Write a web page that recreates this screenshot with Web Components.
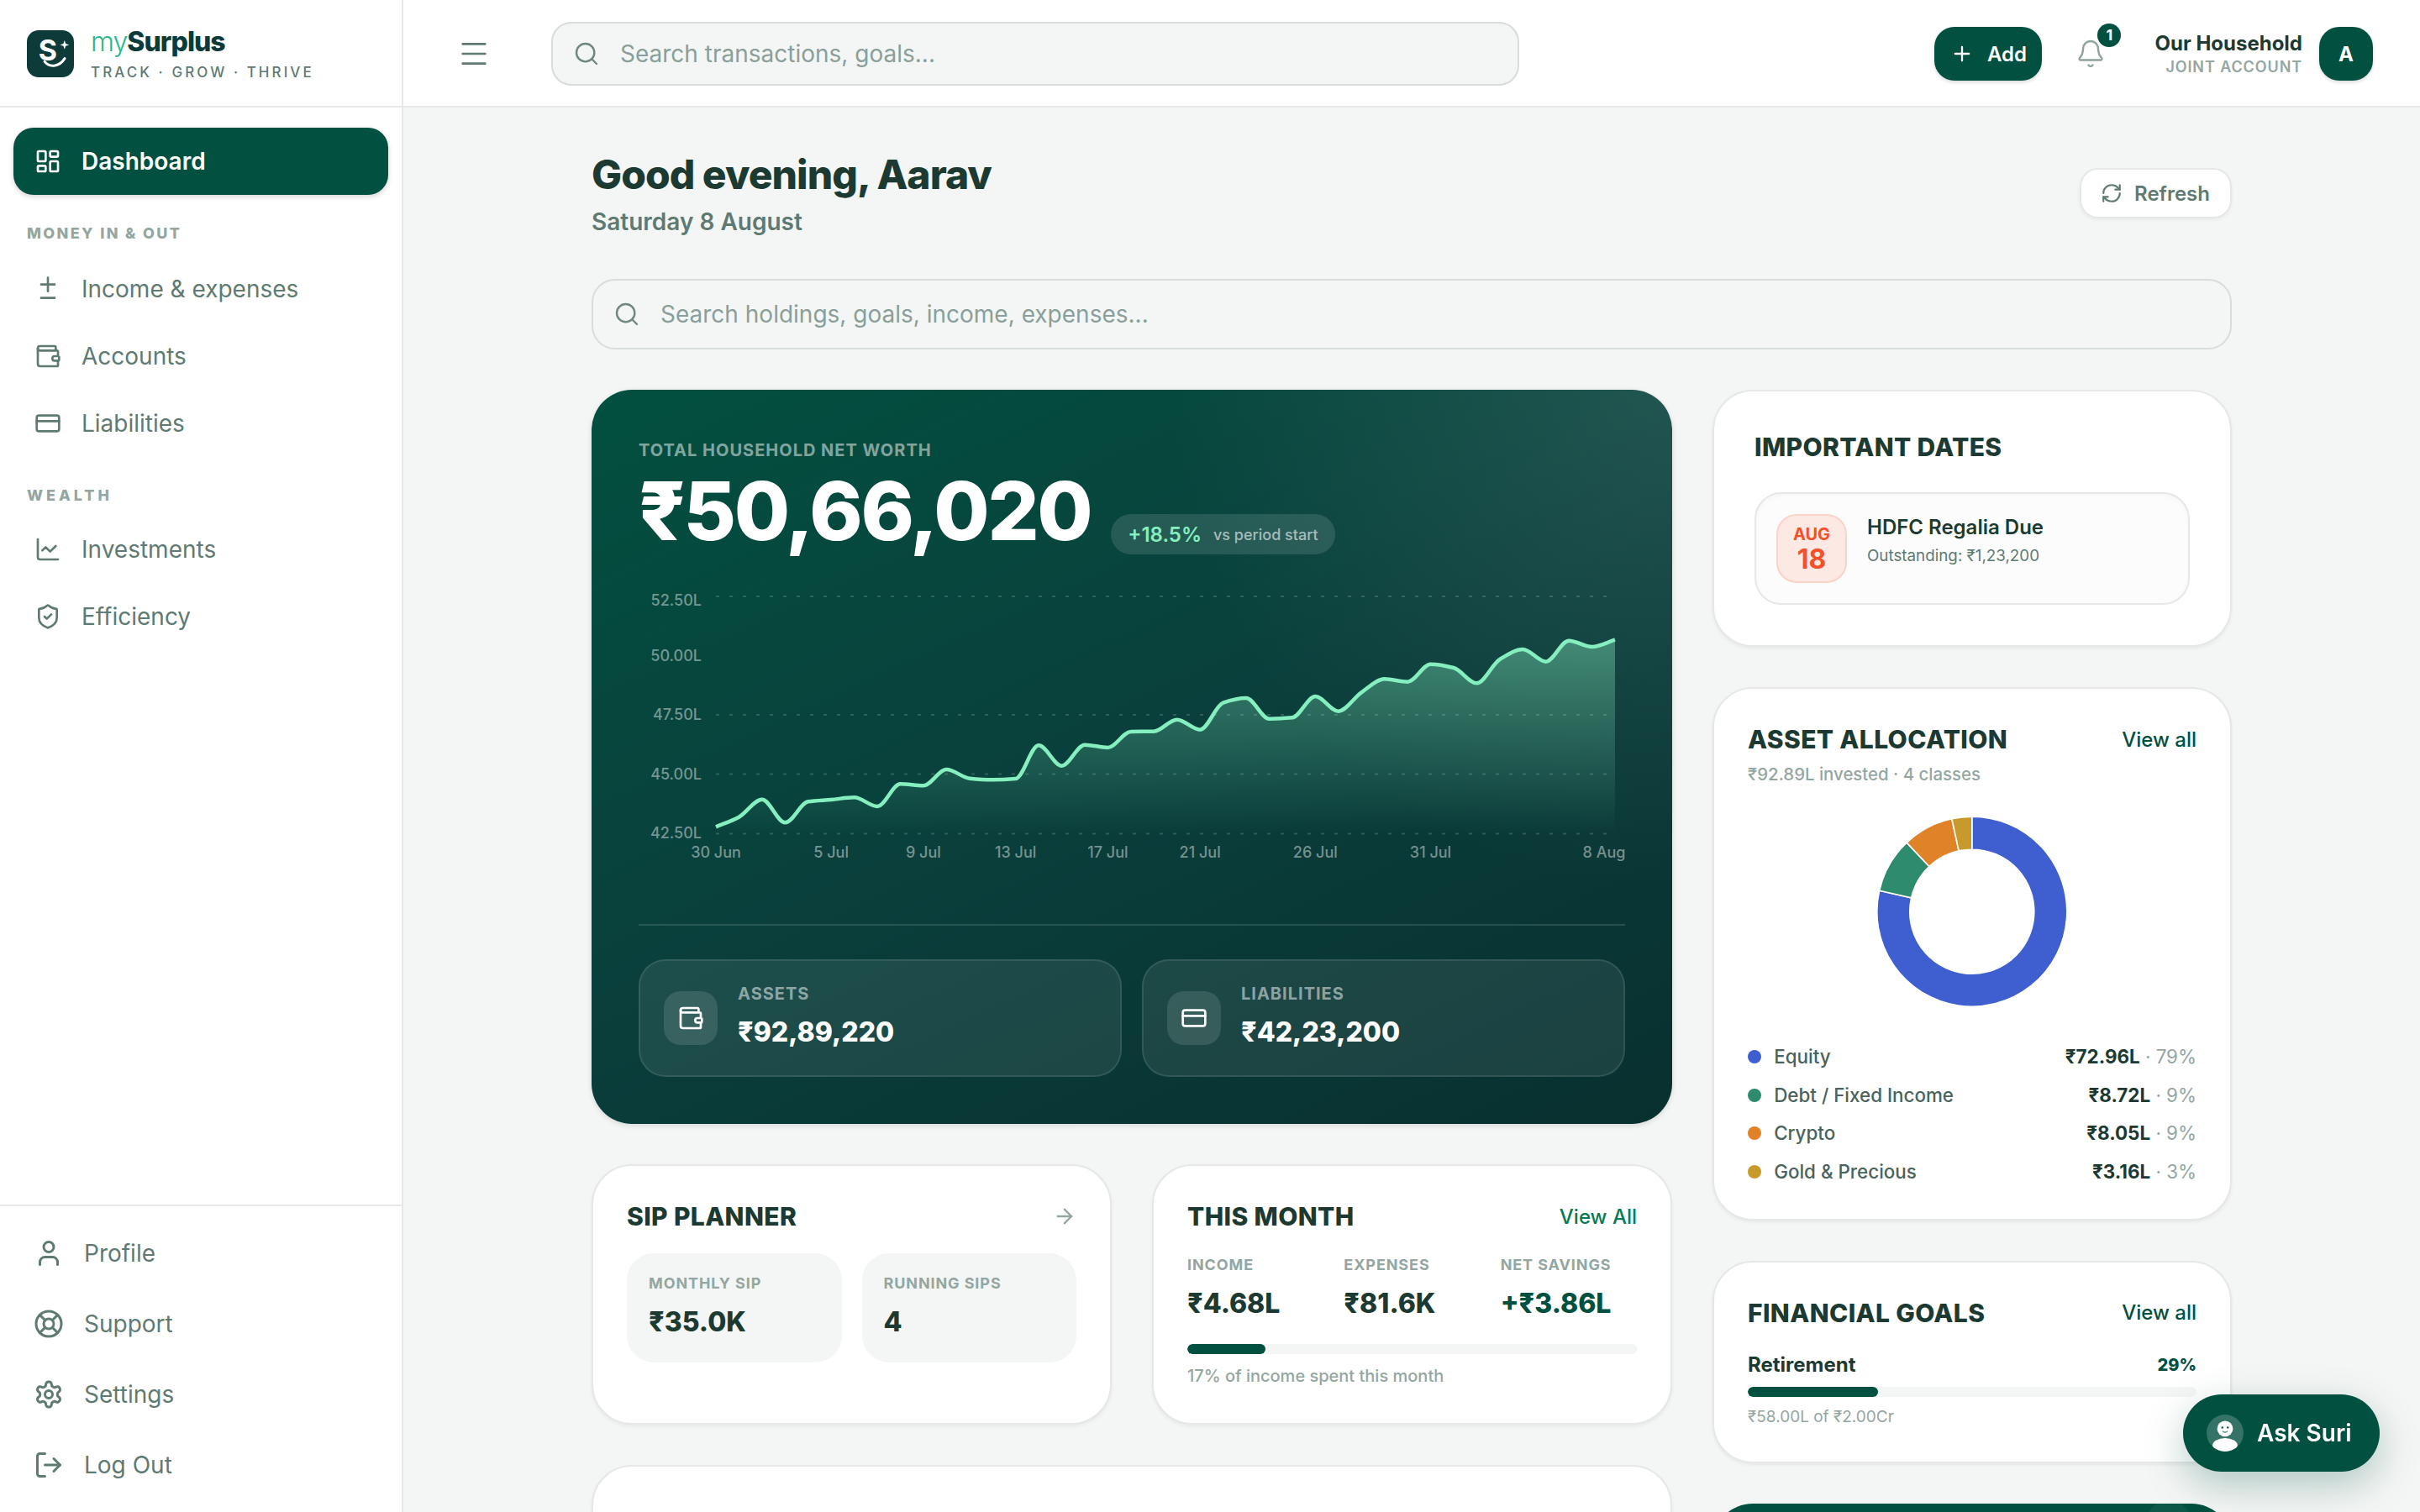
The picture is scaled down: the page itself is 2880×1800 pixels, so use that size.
<!DOCTYPE html>
<html lang="en">
<head>
<meta charset="utf-8">
<title>mySurplus</title>
<style>
/* design is 1440x900, the window is twice that */
html { zoom: 2; }
:root {
    --brand: #02503f;
    --ink: #1c3a31;
    --muted: #5f7a72;
    --faint: #94a6a1;
    --line: #e5e8e7;
    --page: #f4f6f5;
}
body {
    margin: 0;
    width: 1440px;
    height: 900px;
    overflow: hidden;
    background: var(--page);
    color: var(--ink);
    font-family: Inter, "Liberation Sans", sans-serif;
}
</style>
</head>
<body>
<ms-shell></ms-shell>
<ms-ask></ms-ask>

<script>
const ICONS = {
    dashboard: '<rect x="3" y="3" width="7" height="9" rx="1"/><rect x="14" y="3" width="7" height="5" rx="1"/><rect x="14" y="12" width="7" height="9" rx="1"/><rect x="3" y="16" width="7" height="5" rx="1"/>',
    plusminus: '<path d="M12 2v12M6 8h12M6 20h12"/>',
    wallet: '<path d="M19 7V4a1 1 0 0 0-1-1H5a2 2 0 0 0 0 4h15a1 1 0 0 1 1 1v4h-3a2 2 0 0 0 0 4h3a1 1 0 0 0 1-1v-2a1 1 0 0 0-1-1"/><path d="M3 5v14a2 2 0 0 0 2 2h15a1 1 0 0 0 1-1v-4"/>',
    card: '<rect x="2" y="5" width="20" height="14" rx="2"/><path d="M2 10h20"/>',
    chart: '<path d="M3 3v16a2 2 0 0 0 2 2h16"/><path d="m19 9-5 5-4-4-3 3"/>',
    shield: '<path d="M20 13c0 5-3.5 7.5-7.66 8.95a1 1 0 0 1-.67-.01C7.5 20.5 4 18 4 13V6a1 1 0 0 1 1-1c2 0 4.5-1.2 6.24-2.72a1.17 1.17 0 0 1 1.52 0C14.51 3.81 17 5 19 5a1 1 0 0 1 1 1z"/><path d="m9 12 2 2 4-4"/>',
    user: '<circle cx="12" cy="7" r="4"/><path d="M19 21v-2a4 4 0 0 0-4-4H9a4 4 0 0 0-4 4v2"/>',
    lifebuoy: '<circle cx="12" cy="12" r="10"/><circle cx="12" cy="12" r="4"/><path d="m4.93 4.93 4.24 4.24M14.83 9.17l4.24-4.24M14.83 14.83l4.24 4.24M9.17 14.83l-4.24 4.24"/>',
    settings: '<path d="M12.22 2h-.44a2 2 0 0 0-2 2v.18a2 2 0 0 1-1 1.73l-.43.25a2 2 0 0 1-2 0l-.15-.08a2 2 0 0 0-2.73.73l-.22.38a2 2 0 0 0 .73 2.73l.15.1a2 2 0 0 1 1 1.72v.51a2 2 0 0 1-1 1.74l-.15.09a2 2 0 0 0-.73 2.73l.22.38a2 2 0 0 0 2.73.73l.15-.08a2 2 0 0 1 2 0l.43.25a2 2 0 0 1 1 1.73V20a2 2 0 0 0 2 2h.44a2 2 0 0 0 2-2v-.18a2 2 0 0 1 1-1.73l.43-.25a2 2 0 0 1 2 0l.15.08a2 2 0 0 0 2.73-.73l.22-.39a2 2 0 0 0-.73-2.73l-.15-.08a2 2 0 0 1-1-1.74v-.5a2 2 0 0 1 1-1.74l.15-.09a2 2 0 0 0 .73-2.73l-.22-.38a2 2 0 0 0-2.73-.73l-.15.08a2 2 0 0 1-2 0l-.43-.25a2 2 0 0 1-1-1.73V4a2 2 0 0 0-2-2z"/><circle cx="12" cy="12" r="3"/>',
    logout: '<path d="M9 21H5a2 2 0 0 1-2-2V5a2 2 0 0 1 2-2h4"/><path d="m16 17 5-5-5-5"/><path d="M21 12H9"/>',
    menu: '<path d="M4 5h16M4 12h16M4 19h16"/>',
    search: '<circle cx="11" cy="11" r="8"/><path d="m21 21-4.3-4.3"/>',
    plus: '<path d="M5 12h14M12 5v14"/>',
    bell: '<path d="M10.268 21a2 2 0 0 0 3.464 0"/><path d="M3.262 15.326A1 1 0 0 0 4 17h16a1 1 0 0 0 .74-1.673C19.41 13.956 18 12.499 18 8A6 6 0 0 0 6 8c0 4.499-1.411 5.956-2.738 7.326"/>',
    refresh: '<path d="M3 12a9 9 0 0 1 9-9 9.75 9.75 0 0 1 6.74 2.74L21 8"/><path d="M21 3v5h-5"/><path d="M21 12a9 9 0 0 1-9 9 9.75 9.75 0 0 1-6.74-2.74L3 16"/><path d="M8 16H3v5"/>',
    arrow: '<path d="M5 12h14"/><path d="m12 5 7 7-7 7"/>'
};

function icon(name, size, weight = 2) {
    return `<svg width="${size}" height="${size}" viewBox="0 0 24 24" fill="none" stroke="currentColor" stroke-width="${weight}" stroke-linecap="round" stroke-linejoin="round" style="display:block;flex:none">${ICONS[name]}</svg>`;
}

// every element below: its styles plus a render() that fills the shadow root
class MsElement extends HTMLElement {
    constructor() {
        super();
        this.attachShadow({ mode: 'open' });
    }
    connectedCallback() {
        this.shadowRoot.innerHTML = `<style>${this.constructor.css}</style>${this.render()}`;
    }
}

class MsShell extends MsElement {
    static css = `
        :host { display: grid; grid-template-columns: 240px minmax(0, 1fr); width: 1440px; height: 900px; }
        .right { display: flex; flex-direction: column; min-width: 0; height: 900px; }
    `;
    render() {
        return `<ms-sidebar></ms-sidebar><div class="right"><ms-topbar></ms-topbar><ms-main></ms-main></div>`;
    }
}

class MsLogo extends MsElement {
    static css = `
        :host { display: flex; align-items: center; gap: 10px; }
        svg { display: block; flex: none; }
        .name { font-size: 16px; line-height: 20px; letter-spacing: -.03em; color: #0c3b3a; font-weight: 800; }
        .name i { font-style: normal; font-weight: 300; color: #23b98a; }
        .tag { font-size: 8.5px; line-height: 12px; margin-top: 2px; font-weight: 500; letter-spacing: .18em; color: var(--muted); white-space: nowrap; }
    `;
    render() {
        return `
        <svg width="28" height="28" viewBox="0 0 28 28">
            <rect width="28" height="28" rx="7" fill="#0c3b3a"/>
            <text x="12.4" y="18" text-anchor="middle" font-family="Inter" font-size="17" font-weight="700" fill="#fff">S</text>
            <path d="M10.5 18.6c2.6 3.6 8.6 3.6 12-1.8" fill="none" stroke="#fff" stroke-width="1.5" stroke-linecap="round"/>
            <path d="M22.4 6l.7 2 2 .7-2 .7-.7 2-.7-2-2-.7 2-.7z" fill="#fff"/>
        </svg>
        <div><div class="name"><i>my</i>Surplus</div><div class="tag">TRACK · GROW · THRIVE</div></div>`;
    }
}

class MsNavItem extends MsElement {
    static css = `
        :host { display: flex; align-items: center; gap: 12px; height: 40px; padding: 0 12px 0 12.5px; border-radius: 12px; font-size: 14px; color: var(--muted); white-space: nowrap; }
        :host([active]) { background: var(--brand); color: #fff; font-weight: 600; box-shadow: 0 1px 3px rgba(0, 0, 0, .18); }
        :host([foot]) { padding-left: 12px; }
    `;
    render() {
        return `${icon(this.getAttribute('icon'), this.hasAttribute('foot') ? 18 : 16)}<slot></slot>`;
    }
}

class MsNavLabel extends MsElement {
    static css = `
        :host { display: block; padding-left: 8px; font-size: 9px; line-height: 14px; font-weight: 800; letter-spacing: .13em; color: var(--faint); }
    `;
    render() {
        return `<slot></slot>`;
    }
}

class MsSidebar extends MsElement {
    static css = `
        :host { display: flex; flex-direction: column; height: 900px; box-sizing: border-box; background: #fff; border-right: 1px solid var(--line); }
        .brand { height: 64px; box-sizing: border-box; display: flex; align-items: center; padding: 1px 0 0 16px; border-bottom: 1px solid var(--line); }
        nav { padding: 12px 8px 0; display: flex; flex-direction: column; flex: 1; }
        ms-nav-label { margin: 16px 0 6px; }
        .wide { letter-spacing: .22em; margin-bottom: 5px; }
        .foot { border-top: 1px solid var(--line); padding: 8px; display: flex; flex-direction: column; gap: 2px; }
    `;
    render() {
        return `
        <div class="brand"><ms-logo></ms-logo></div>
        <nav>
            <ms-nav-item icon="dashboard" active>Dashboard</ms-nav-item>
            <ms-nav-label>MONEY IN &amp; OUT</ms-nav-label>
            <ms-nav-item icon="plusminus">Income &amp; expenses</ms-nav-item>
            <ms-nav-item icon="wallet">Accounts</ms-nav-item>
            <ms-nav-item icon="card">Liabilities</ms-nav-item>
            <ms-nav-label class="wide">WEALTH</ms-nav-label>
            <ms-nav-item icon="chart">Investments</ms-nav-item>
            <ms-nav-item icon="shield">Efficiency</ms-nav-item>
        </nav>
        <div class="foot">
            <ms-nav-item icon="user" foot>Profile</ms-nav-item>
            <ms-nav-item icon="lifebuoy" foot>Support</ms-nav-item>
            <ms-nav-item icon="settings" foot>Settings</ms-nav-item>
            <ms-nav-item icon="logout" foot>Log Out</ms-nav-item>
        </div>`;
    }
}

class MsSearch extends MsElement {
    static css = `
        :host { display: flex; align-items: center; gap: 12px; box-sizing: border-box; padding-left: 12px; background: var(--page); border: 1px solid #d6dddb; font-size: 14px; color: #8a9f99; white-space: nowrap; }
        svg { color: #6f8780; }
    `;
    render() {
        return `${icon('search', 16, 1.8)}<span>${this.getAttribute('placeholder')}</span>`;
    }
}

class MsTopbar extends MsElement {
    static css = `
        :host { display: flex; align-items: center; flex: none; height: 64px; box-sizing: border-box; padding: 1px 28px 0 24px; background: #fff; border-bottom: 1px solid var(--line); }
        .burger { width: 36px; display: flex; justify-content: center; color: var(--muted); }
        ms-search { margin-left: 28px; width: 576px; height: 38px; border-radius: 12px; }
        .right { margin-left: auto; display: flex; align-items: center; }
        .add { display: flex; align-items: center; gap: 8px; height: 32px; width: 64px; box-sizing: border-box; justify-content: center; border-radius: 12px; background: var(--brand); color: #fff; font-size: 12px; font-weight: 600; box-shadow: 0 1px 2px rgba(0, 0, 0, .15); }
        .bell { position: relative; width: 32px; height: 32px; margin: 0 22px 0 13px; display: flex; align-items: center; justify-content: center; color: #8fa29d; }
        .badge { position: absolute; top: -2px; right: -2px; width: 14px; height: 14px; border-radius: 50%; background: var(--brand); color: #fff; font-size: 9px; font-weight: 700; line-height: 14px; text-align: center; }
        .who { text-align: right; margin-right: 10px; }
        .who b { display: block; font-size: 12px; line-height: 16px; font-weight: 700; color: var(--ink); }
        .who span { display: block; font-size: 9px; line-height: 12px; font-weight: 600; letter-spacing: .05em; color: var(--faint); }
        .avatar { width: 32px; height: 32px; border-radius: 12px; background: var(--brand); color: #fff; font-size: 12px; font-weight: 700; display: flex; align-items: center; justify-content: center; box-shadow: 0 1px 2px rgba(0, 0, 0, .15); }
    `;
    render() {
        return `
        <div class="burger">${icon('menu', 20, 1.6)}</div>
        <ms-search placeholder="Search transactions, goals..."></ms-search>
        <div class="right">
            <div class="add">${icon('plus', 14)}<span>Add</span></div>
            <div class="bell">${icon('bell', 18, 1.6)}<span class="badge">1</span></div>
            <div class="who"><b>Our Household</b><span>JOINT ACCOUNT</span></div>
            <div class="avatar">A</div>
        </div>`;
    }
}

class MsMain extends MsElement {
    static css = `
        :host { display: block; flex: 1; min-height: 0; overflow: hidden; padding: 24px 112px 0; }
        .head { display: flex; align-items: center; justify-content: space-between; }
        h1 { margin: 0; font-size: 24px; line-height: 32px; font-weight: 800; letter-spacing: -.02em; color: var(--ink); }
        p { margin: 2px 0 0; font-size: 14px; line-height: 20px; font-weight: 600; color: var(--muted); }
        .refresh { display: flex; align-items: center; gap: 7px; height: 30px; padding: 0 12px 0 11.5px; box-sizing: border-box; border-radius: 11px; background: #fff; border: 1px solid var(--line); box-shadow: 0 1px 2px rgba(0, 0, 0, .05); font-size: 12px; font-weight: 600; color: var(--muted); }
        ms-search { height: 42px; border-radius: 14px; margin: 24px 0; }
        .grid { display: grid; grid-template-columns: minmax(0, 1fr) 309px; gap: 24px; align-items: start; }
        .left, .side { display: flex; flex-direction: column; gap: 24px; }
        .pair { display: grid; grid-template-columns: 1fr 1fr; gap: 24px; }
        .later { height: 200px; }
    `;
    render() {
        return `
        <div class="head">
            <div><h1>Good evening, Aarav</h1><p>Saturday 8 August</p></div>
            <div class="refresh">${icon('refresh', 13)}<span>Refresh</span></div>
        </div>
        <ms-search placeholder="Search holdings, goals, income, expenses..."></ms-search>
        <div class="grid">
            <div class="left">
                <ms-hero></ms-hero>
                <div class="pair"><ms-sip></ms-sip><ms-month></ms-month></div>
                <ms-card class="later"></ms-card>
            </div>
            <div class="side">
                <ms-dates></ms-dates>
                <ms-allocation></ms-allocation>
                <ms-goals></ms-goals>
                <ms-promo></ms-promo>
            </div>
        </div>`;
    }
}

class MsHero extends MsElement {
    static css = `
        :host { display: block; box-sizing: border-box; height: 437px; padding: 28px; border-radius: 24px; color: #fff; overflow: hidden;
            background: radial-gradient(circle 300px at 100% 0, rgba(255, 255, 255, .1), rgba(255, 255, 255, 0)), linear-gradient(155deg, #02503f 0%, #0a3f3c 50%, #08302f 100%);
            box-shadow: 0 1px 3px rgba(0, 0, 0, .12); }
        .label { margin-top: 1px; font-size: 10px; line-height: 14px; font-weight: 700; letter-spacing: .05em; color: rgba(255, 255, 255, .5); }
        .row { display: flex; align-items: flex-end; gap: 12px; margin-top: 1px; }
        .total { font-size: 48px; line-height: 56px; font-weight: 800; letter-spacing: -.025em; }
        .badge { display: flex; align-items: center; gap: 7px; height: 24px; margin-bottom: 2px; padding: 0 10px; border-radius: 12px; background: rgba(255, 255, 255, .12); white-space: nowrap; }
        .badge b { font-size: 12px; font-weight: 600; color: #86efbf; }
        .badge span { font-size: 9px; font-weight: 500; color: rgba(255, 255, 255, .6); }
        ms-chart { margin: 12px 0 30px; }
        hr { border: 0; height: 1px; margin: 0 0 20px; background: rgba(255, 255, 255, .13); }
        .stats { display: grid; grid-template-columns: 1fr 1fr; gap: 12px; }
    `;
    render() {
        return `
        <div class="label">TOTAL HOUSEHOLD NET WORTH</div>
        <div class="row"><div class="total">₹50,66,020</div><div class="badge"><b>+18.5%</b><span>vs period start</span></div></div>
        <ms-chart></ms-chart>
        <hr>
        <div class="stats">
            <ms-stat icon="wallet" label="ASSETS" value="₹92,89,220"></ms-stat>
            <ms-stat icon="card" label="LIABILITIES" value="₹42,23,200"></ms-stat>
        </div>`;
    }
}

// y of each day's point, read off the reference
const NET_WORTH = [913, 878, 815, 898, 823, 816, 808, 840, 760, 766, 708, 740, 745, 741, 622, 695, 620, 630, 573, 572,
    530, 566, 470, 453, 527, 523, 447, 500, 433, 385, 395, 332, 345, 400, 315, 279, 323, 248, 270, 245].map(v => 340 + v / 6);

// same curve as d3 monotoneX
function monotonePath(pts) {
    const n = pts.length;
    const slope = [];
    for (let i = 0; i < n - 1; i++) slope.push((pts[i + 1][1] - pts[i][1]) / (pts[i + 1][0] - pts[i][0]));
    const t = [slope[0]];
    for (let i = 1; i < n - 1; i++) {
        t.push(slope[i - 1] * slope[i] <= 0 ? 0 : 2 * slope[i - 1] * slope[i] / (slope[i - 1] + slope[i]));
    }
    t.push(slope[n - 2]);
    let d = `M${pts[0][0]} ${pts[0][1]}`;
    for (let i = 0; i < n - 1; i++) {
        const h = (pts[i + 1][0] - pts[i][0]) / 3;
        d += `C${pts[i][0] + h} ${pts[i][1] + h * t[i]} ${pts[i + 1][0] - h} ${pts[i + 1][1] - h * t[i + 1]} ${pts[i + 1][0]} ${pts[i + 1][1]}`;
    }
    return d;
}

class MsChart extends MsElement {
    static css = `
        :host { display: block; height: 176px; }
        svg { display: block; width: 588px; height: 176px; overflow: visible; }
        text { font-family: Inter, sans-serif; font-size: 9px; font-weight: 500; fill: rgba(255, 255, 255, .45); }
    `;
    render() {
        const left = 426, right = 961, floor = 496.2;
        const pts = NET_WORTH.map((y, i) => [left + (right - left) * i / 39, +y.toFixed(2)]);
        const line = monotonePath(pts);
        const grid = [355, 425.5, 460.8, 496.2].map(y =>
            `<line x1="${left}" x2="${right}" y1="${y}" y2="${y}" stroke="rgba(255,255,255,.16)" stroke-dasharray="2 6"/>`).join('');
        const yLabels = [['52.50L', 360.5], ['50.00L', 393.7], ['47.50L', 428.7], ['45.00L', 464.2], ['42.50L', 499.2]].map(([t, y]) =>
            `<text x="417.5" y="${y}" text-anchor="end">${t}</text>`).join('');
        const xLabels = [['30 Jun', 0], ['5 Jul', 5], ['9 Jul', 9], ['13 Jul', 13], ['17 Jul', 17], ['21 Jul', 21], ['26 Jul', 26], ['31 Jul', 31]].map(([t, i]) =>
            `<text x="${pts[i][0]}" y="510.7" text-anchor="middle">${t}</text>`).join('');
        return `
        <svg viewBox="380 344 588 176">
            <defs><linearGradient id="fill" gradientUnits="userSpaceOnUse" x1="0" y1="381" x2="0" y2="${floor}">
                <stop offset="0" stop-color="#86efbf" stop-opacity=".4"/><stop offset="1" stop-color="#86efbf" stop-opacity="0"/>
            </linearGradient></defs>
            ${grid}${yLabels}${xLabels}
            <text x="954.5" y="510.7" text-anchor="middle">8 Aug</text>
            <path d="${line}L${right} ${floor}L${left} ${floor}Z" fill="url(#fill)"/>
            <path d="${line}" fill="none" stroke="#86efbf" stroke-width="2.25"/>
        </svg>`;
    }
}

class MsStat extends MsElement {
    static css = `
        :host { display: flex; align-items: center; gap: 12px; box-sizing: border-box; height: 70px; padding: 0 14px; border-radius: 16px; background: rgba(255, 255, 255, .08); border: 1px solid rgba(255, 255, 255, .1); }
        .box { width: 32px; height: 32px; border-radius: 10px; background: rgba(255, 255, 255, .12); display: flex; align-items: center; justify-content: center; color: #fff; flex: none; }
        .text { margin-top: -1px; }
        .label { font-size: 10px; line-height: 14px; font-weight: 700; letter-spacing: .05em; color: rgba(255, 255, 255, .5); }
        .value { font-size: 16px; line-height: 24px; margin-top: 4px; font-weight: 800; color: #fff; }
    `;
    render() {
        return `
        <div class="box">${icon(this.getAttribute('icon'), 16)}</div>
        <div class="text"><div class="label">${this.getAttribute('label')}</div><div class="value">${this.getAttribute('value')}</div></div>`;
    }
}

class MsCard extends MsElement {
    static css = `
        :host { display: block; box-sizing: border-box; background: #fff; border: 1px solid var(--line); border-radius: 24px; box-shadow: 0 1px 2px rgba(0, 0, 0, .06); padding: 20px; }
    `;
    render() {
        return `<slot></slot>`;
    }
}

class MsCardHead extends MsElement {
    static css = `
        :host { display: flex; align-items: center; justify-content: space-between; height: 20px; }
        h2 { margin: 0; font-size: 15px; line-height: 20px; font-weight: 800; letter-spacing: .012em; color: var(--ink); }
    `;
    render() {
        return `<h2>${this.getAttribute('heading')}</h2><slot></slot>`;
    }
}

class MsTile extends MsElement {
    static css = `
        :host { display: block; padding: 11px 13px 12px; border-radius: 16px; background: var(--page); }
        .label { font-size: 9px; line-height: 14px; font-weight: 700; letter-spacing: .05em; color: var(--faint); white-space: nowrap; }
        .value { font-size: 16px; line-height: 24px; margin-top: 4px; font-weight: 800; color: var(--ink); }
    `;
    render() {
        return `<div class="label">${this.getAttribute('label')}</div><div class="value">${this.getAttribute('value')}</div>`;
    }
}

class MsSip extends MsElement {
    static css = `
        :host { display: block; }
        ms-card { height: 100%; }
        .arrow { color: var(--faint); }
        .tiles { display: grid; grid-template-columns: 1fr 1fr; gap: 12px; margin-top: 12px; }
    `;
    render() {
        return `
        <ms-card>
            <ms-card-head heading="SIP PLANNER"><span class="arrow">${icon('arrow', 14)}</span></ms-card-head>
            <div class="tiles"><ms-tile label="MONTHLY SIP" value="₹35.0K"></ms-tile><ms-tile label="RUNNING SIPS" value="4"></ms-tile></div>
        </ms-card>`;
    }
}

class MsProgress extends MsElement {
    static css = `
        :host { display: block; height: 6px; border-radius: 3px; background: var(--page); overflow: hidden; }
        div { height: 100%; border-radius: 3px; background: var(--brand); }
    `;
    render() {
        return `<div style="width:${this.getAttribute('value')}%"></div>`;
    }
}

class MsMonth extends MsElement {
    static css = `
        :host { display: block; }
        ms-card { height: 100%; padding-bottom: 21px; }
        a { font-size: 12px; font-weight: 500; color: #067a55; }
        .cols { display: grid; grid-template-columns: repeat(3, 1fr); gap: 12px; margin-top: 12px; }
        .label { font-size: 9px; line-height: 14px; font-weight: 700; letter-spacing: .05em; color: var(--faint); white-space: nowrap; }
        .value { font-size: 16px; line-height: 24px; margin-top: 4px; font-weight: 800; color: var(--ink); }
        .net { color: var(--brand); }
        ms-progress { margin-top: 12px; }
        .note { margin-top: 6px; font-size: 10px; line-height: 14px; font-weight: 500; color: var(--faint); }
    `;
    render() {
        return `
        <ms-card>
            <ms-card-head heading="THIS MONTH"><a>View All</a></ms-card-head>
            <div class="cols">
                <div><div class="label">INCOME</div><div class="value">₹4.68L</div></div>
                <div><div class="label">EXPENSES</div><div class="value">₹81.6K</div></div>
                <div><div class="label">NET SAVINGS</div><div class="value net">+₹3.86L</div></div>
            </div>
            <ms-progress value="17.4"></ms-progress>
            <div class="note">17% of income spent this month</div>
        </ms-card>`;
    }
}

class MsDates extends MsElement {
    static css = `
        :host { display: block; }
        ms-card { padding: 23px 24px 24px; }
        .row { display: flex; align-items: flex-start; gap: 12px; margin-top: 17px; padding: 12px; height: 67px; box-sizing: border-box; border: 1px solid var(--line); border-radius: 16px; background: #fcfcfc; box-shadow: inset 0 1px 3px rgba(0, 0, 0, .03); }
        .date { width: 42px; height: 41px; box-sizing: border-box; border-radius: 12px; background: #fde9e4; border: 1px solid #fbd3c8; color: #f2512a; text-align: center; flex: none; }
        .date span { display: block; font-size: 10px; line-height: 12px; margin-top: 5px; font-weight: 700; }
        .date b { display: block; font-size: 16px; line-height: 18px; font-weight: 700; }
        .what { margin-top: -1px; }
        .what b { display: block; font-size: 12px; line-height: 18px; font-weight: 600; color: var(--ink); }
        .what span { display: block; margin-top: 1px; font-size: 9.4px; line-height: 14px; color: var(--muted); }
    `;
    render() {
        return `
        <ms-card>
            <ms-card-head heading="IMPORTANT DATES"></ms-card-head>
            <div class="row">
                <div class="date"><span>AUG</span><b>18</b></div>
                <div class="what"><b>HDFC Regalia Due</b><span>Outstanding: ₹1,23,200</span></div>
            </div>
        </ms-card>`;
    }
}

const ALLOCATION = [
    ['Equity', '₹72.96L', '79%', 72.96, '#3f5fd1'],
    ['Debt / Fixed Income', '₹8.72L', '9%', 8.72, '#2e8b6e'],
    ['Crypto', '₹8.05L', '9%', 8.05, '#e08228'],
    ['Gold &amp; Precious', '₹3.16L', '3%', 3.16, '#c89a2c']
];

class MsAllocation extends MsElement {
    static css = `
        :host { display: block; }
        a { font-size: 12px; font-weight: 500; color: var(--brand); }
        .sub { margin-top: 3px; font-size: 10.2px; line-height: 16px; font-weight: 500; color: var(--faint); }
        svg { display: block; }
        .legend { display: flex; flex-direction: column; gap: 6.75px; }
        .item { display: flex; align-items: center; font-size: 11.2px; line-height: 16px; font-weight: 500; color: #4a635c; }
        .dot { width: 8px; height: 8px; border-radius: 50%; margin-right: 7.6px; flex: none; }
        .amt { margin-left: auto; font-weight: 700; color: var(--ink); }
        .pct { font-weight: 400; color: var(--faint); }
    `;
    arcs() {
        const total = ALLOCATION.reduce((sum, row) => sum + row[3], 0);
        const cx = 133.4, cy = 73.6, R = 56.5, r = 37;
        let start = 0;
        return ALLOCATION.map(row => {
            const end = start + row[3] / total * 2 * Math.PI;
            const pt = (rad, a) => `${(cx + rad * Math.sin(a)).toFixed(2)} ${(cy - rad * Math.cos(a)).toFixed(2)}`;
            const big = end - start > Math.PI ? 1 : 0;
            const d = `M${pt(R, start)}A${R} ${R} 0 ${big} 1 ${pt(R, end)}L${pt(r, end)}A${r} ${r} 0 ${big} 0 ${pt(r, start)}Z`;
            start = end;
            return `<path d="${d}" fill="${row[4]}" stroke="#fff" stroke-width=".8"/>`;
        }).join('');
    }
    render() {
        const legend = ALLOCATION.map(row => `
            <div class="item"><span class="dot" style="background:${row[4]}"></span>${row[0]}<span class="amt">${row[1]}<span class="pct"> · ${row[2]}</span></span></div>`).join('');
        return `
        <ms-card>
            <ms-card-head heading="ASSET ALLOCATION"><a>View all</a></ms-card-head>
            <div class="sub">₹92.89L invested · 4 classes</div>
            <svg width="267" height="152" viewBox="0 0 267 152">${this.arcs()}</svg>
            <div class="legend">${legend}</div>
        </ms-card>`;
    }
}

class MsGoals extends MsElement {
    static css = `
        :host { display: block; }
        ms-card { padding-bottom: 19.5px; }
        a { font-size: 12px; font-weight: 500; color: var(--brand); }
        .row { display: flex; justify-content: space-between; align-items: center; margin-top: 12px; height: 18px; }
        .row b { font-size: 12px; font-weight: 700; color: var(--ink); }
        .row span { font-size: 10px; font-weight: 800; color: var(--brand); }
        ms-progress { margin-top: 4px; }
        .note { margin-top: 5px; font-size: 9.5px; line-height: 14px; color: var(--faint); }
    `;
    render() {
        return `
        <ms-card>
            <ms-card-head heading="FINANCIAL GOALS"><a>View all</a></ms-card-head>
            <div class="row"><b>Retirement</b><span>29%</span></div>
            <ms-progress value="29"></ms-progress>
            <div class="note">₹58.00L of ₹2.00Cr</div>
        </ms-card>`;
    }
}

class MsPromo extends MsElement {
    static css = `
        :host { display: block; height: 120px; border-radius: 24px; background: var(--brand); position: relative; overflow: hidden; }
        i { position: absolute; left: 258px; top: -2px; width: 27px; height: 60px; border-radius: 14px; background: rgba(255, 255, 255, .05); }
    `;
    render() {
        return `<i></i>`;
    }
}

class MsAsk extends MsElement {
    static css = `
        :host { position: fixed; right: 24px; bottom: 24px; display: flex; align-items: center; gap: 8px; box-sizing: border-box; width: 117px; height: 46px; padding-left: 14px; border-radius: 23px; background: var(--brand); color: #fff; font-size: 14px; font-weight: 600; box-shadow: 0 8px 24px rgba(2, 80, 63, .28); white-space: nowrap; }
        svg { display: block; flex: none; }
    `;
    render() {
        return `
        <svg width="22" height="22" viewBox="0 0 22 22">
            <defs><clipPath id="round"><circle cx="11" cy="11" r="11"/></clipPath></defs>
            <circle cx="11" cy="11" r="11" fill="#fff" fill-opacity=".2"/>
            <g clip-path="url(#round)">
                <circle cx="11" cy="8.4" r="4.7" fill="#fff"/>
                <circle cx="9.4" cy="7.7" r=".6" fill="#02503f"/><circle cx="12.6" cy="7.7" r=".6" fill="#02503f"/>
                <path d="M9.6 10c.8.8 2 .8 2.8 0" fill="none" stroke="#02503f" stroke-width=".5" stroke-linecap="round"/>
                <ellipse cx="11" cy="18.3" rx="7.4" ry="4.3" fill="#fff"/>
            </g>
        </svg>
        <span>Ask Suri</span>`;
    }
}

customElements.define('ms-shell', MsShell);
customElements.define('ms-logo', MsLogo);
customElements.define('ms-nav-item', MsNavItem);
customElements.define('ms-nav-label', MsNavLabel);
customElements.define('ms-sidebar', MsSidebar);
customElements.define('ms-search', MsSearch);
customElements.define('ms-topbar', MsTopbar);
customElements.define('ms-main', MsMain);
customElements.define('ms-hero', MsHero);
customElements.define('ms-chart', MsChart);
customElements.define('ms-stat', MsStat);
customElements.define('ms-card', MsCard);
customElements.define('ms-card-head', MsCardHead);
customElements.define('ms-tile', MsTile);
customElements.define('ms-sip', MsSip);
customElements.define('ms-progress', MsProgress);
customElements.define('ms-month', MsMonth);
customElements.define('ms-dates', MsDates);
customElements.define('ms-allocation', MsAllocation);
customElements.define('ms-goals', MsGoals);
customElements.define('ms-promo', MsPromo);
customElements.define('ms-ask', MsAsk);
</script>
</body>
</html>
